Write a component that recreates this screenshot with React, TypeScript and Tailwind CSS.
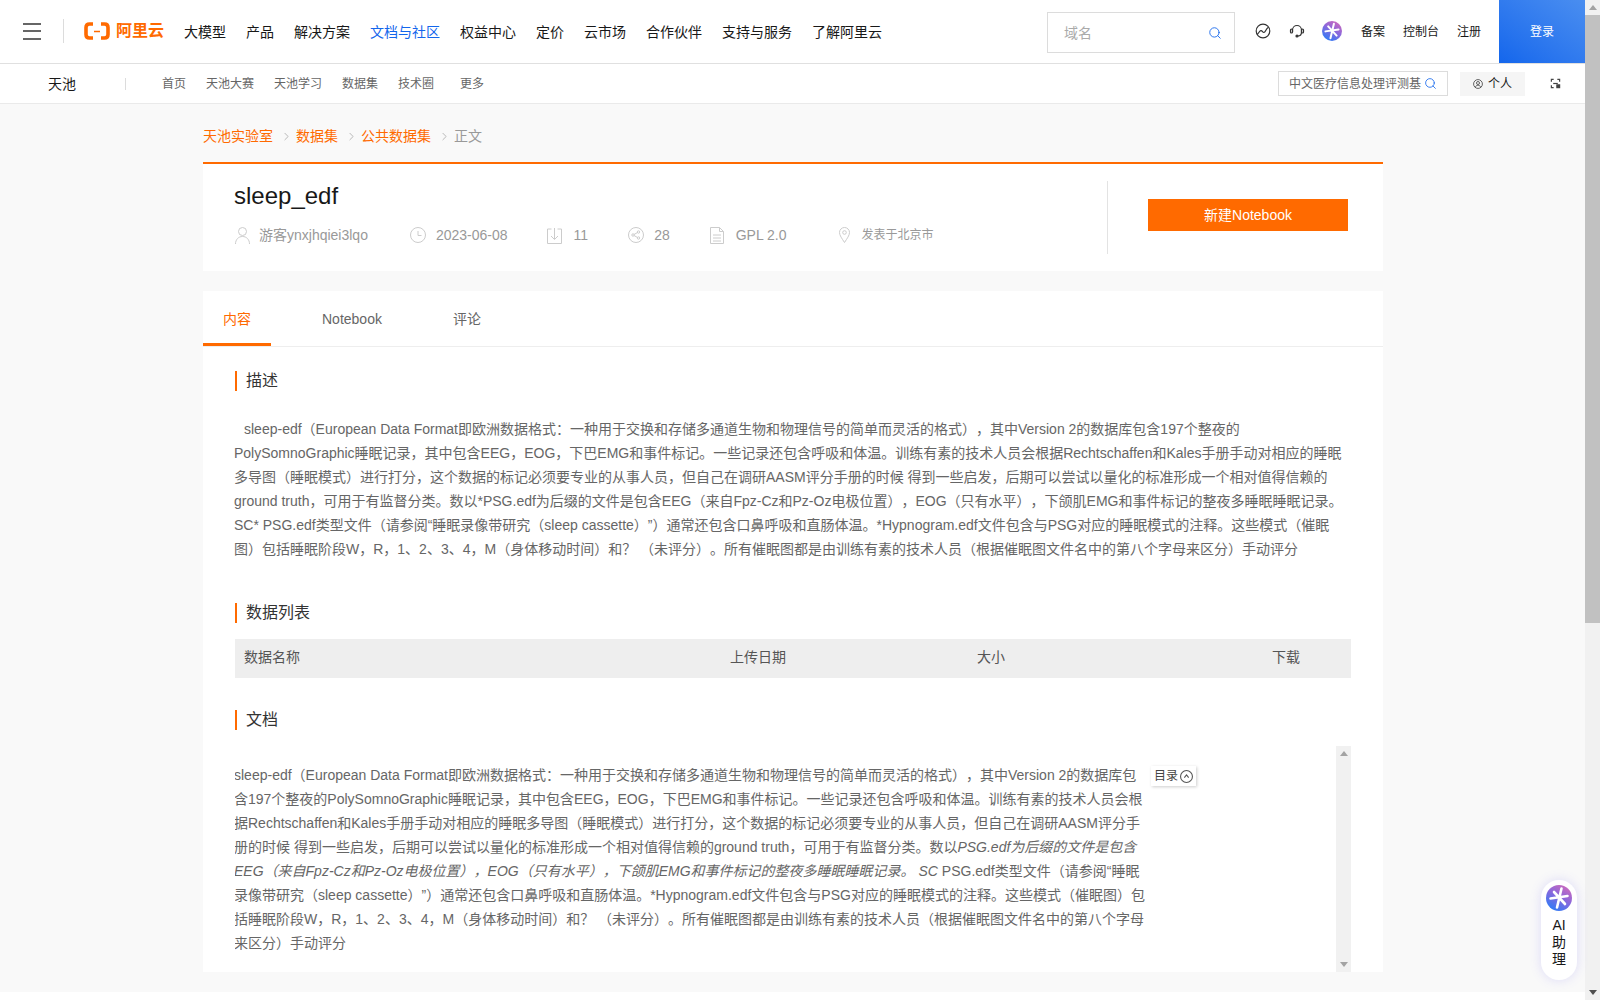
import { ChevronRight, Search } from 'lucide-react';

const navItems = ['大模型', '产品', '解决方案', '文档与社区', '权益中心', '定价', '云市场', '合作伙伴', '支持与服务', '了解阿里云'];
const subNavItems = ['首页', '天池大赛', '天池学习', '数据集', '技术圈'];

const descLines = [
  'sleep-edf（European Data Format即欧洲数据格式：一种用于交换和存储多通道生物和物理信号的简单而灵活的格式），其中Version 2的数据库包含197个整夜的',
  'PolySomnoGraphic睡眠记录，其中包含EEG，EOG，下巴EMG和事件标记。一些记录还包含呼吸和体温。训练有素的技术人员会根据Rechtschaffen和Kales手册手动对相应的睡眠',
  '多导图（睡眠模式）进行打分，这个数据的标记必须要专业的从事人员，但自己在调研AASM评分手册的时候 得到一些启发，后期可以尝试以量化的标准形成一个相对值得信赖的',
  'ground truth，可用于有监督分类。数以*PSG.edf为后缀的文件是包含EEG（来自Fpz-Cz和Pz-Oz电极位置），EOG（只有水平），下颌肌EMG和事件标记的整夜多睡眠睡眠记录。',
  'SC* PSG.edf类型文件（请参阅“睡眠录像带研究（sleep cassette）”）通常还包含口鼻呼吸和直肠体温。*Hypnogram.edf文件包含与PSG对应的睡眠模式的注释。这些模式（催眠',
  '图）包括睡眠阶段W，R，1、2、3、4，M（身体移动时间）和？ （未评分）。所有催眠图都是由训练有素的技术人员（根据催眠图文件名中的第八个字母来区分）手动评分',
];

function SectionTitle({ children }: { children: string }) {
  return (
    <h2 className="h-5 border-l-2 border-[#ff6a00] pl-[9px] text-base leading-5 font-normal text-[#333]">{children}</h2>
  );
}

function AiBadge({ className }: { className: string }) {
  return (
    <svg viewBox="0 0 26 26" className={className}>
      <defs>
        <linearGradient id="ai-grad" x1="0.9" y1="0" x2="0.3" y2="1">
          <stop offset="0" stopColor="#d66ab8" />
          <stop offset="0.5" stopColor="#8a68dc" />
          <stop offset="1" stopColor="#2f7bf6" />
        </linearGradient>
      </defs>
      <circle cx="13" cy="13" r="13" fill="url(#ai-grad)" />
      <path d="M15.5 3.5 11 22.5M4.5 13.5 21.5 11M8 7l11 12" stroke="#fff" strokeWidth="2.6" strokeLinecap="round" />
    </svg>
  );
}

function TopNav() {
  return (
    <header className="flex h-16 items-center border-b border-[#e0e0e0] bg-white pb-px">
      <div className="ml-[23px] flex h-[17px] w-[18px] flex-col justify-between">
        <span className="h-0.5 bg-[#666]" />
        <span className="h-0.5 bg-[#666]" />
        <span className="h-0.5 bg-[#666]" />
      </div>
      <span className="ml-[22px] h-6 w-px bg-[#dcdcdc]" />
      <div className="ml-5 flex w-[80px] items-center gap-1.5">
        <svg viewBox="0 0 26 18" className="h-[18px] w-[26px] shrink-0">
          <path d="M9 2H5.500Q2 2 2 5.500v7Q2 16 5.500 16H9M17 2h3.500Q24 2 24 5.500v7q0 3.500-3.500 3.500H17" fill="none" stroke="#ff6a00" strokeWidth="3.600" />
          <path d="M10 9.500h6" stroke="#ff6a00" strokeWidth="1.500" />
        </svg>
        <span className="text-base leading-5 font-bold whitespace-nowrap text-[#ff6a00]">阿里云</span>
      </div>
      <nav className="mt-0.5 ml-[20px] flex gap-5 text-sm text-[#181818]">
        {navItems.map((item) => (
          <a key={item} className={item === '文档与社区' ? 'whitespace-nowrap text-[#1366ec]' : 'whitespace-nowrap'}>
            {item}
          </a>
        ))}
      </nav>
      <div className="mt-3 ml-auto flex h-[41px] w-[188px] items-center justify-between self-start border border-[#dcdcdc] pr-3 pl-4 text-sm text-[#aaa]">
        域名
        <Search className="size-3.5 text-[#1366ec]" strokeWidth={1.5} />
      </div>
      <svg viewBox="0 0 16 16" fill="none" stroke="#333" strokeWidth="1.2" className="ml-[20px] size-4">
        <circle cx="8" cy="8" r="6.800" />
        <path d="M2 11.500c1.500-.5 2-3.500 3.800-3.800 1.700-.3 1.700 2 3.200 1.800 1.800-.3 1.800-3.500 4-5" />
      </svg>
      <svg viewBox="0 0 16 16" fill="none" stroke="#333" strokeWidth="1.2" className="ml-[18px] size-4">
        <path d="M3.500 9V7a4.500 4.500 0 0 1 9 0v2c0 2.500-1.500 4-3.500 4" />
        <rect x="1.500" y="6" width="2" height="4" rx="1" />
        <rect x="12.500" y="6" width="2" height="4" rx="1" />
        <circle cx="8" cy="13" r="1" fill="#333" />
      </svg>
      <AiBadge className="ml-[17px] size-5" />
      <div className="mt-0.5 ml-[19px] flex gap-[18px] text-xs text-[#181818]">
        <a>备案</a>
        <a>控制台</a>
        <a>注册</a>
      </div>
      <button className="mb-[-1px] ml-[18px] h-[63px] w-[86px] self-start bg-gradient-to-tr from-[#1366ec] to-[#4a8ef0] text-xs text-white">
        登录
      </button>
    </header>
  );
}

function SubNav() {
  return (
    <div className="flex h-10 items-center border-b border-[#eaeaea] bg-white text-xs">
      <span className="ml-12 text-sm text-[#181818]">天池</span>
      <span className="ml-[49px] h-3 w-px bg-[#dcdcdc]" />
      <nav className="ml-[36px] flex gap-5 text-[#666]">
        {subNavItems.map((item) => (
          <a key={item}>{item}</a>
        ))}
        <a className="ml-1.5">更多</a>
      </nav>
      <div className="ml-auto flex h-[25px] w-[170px] items-center border border-[#dcdcdc] pl-[10px] text-[#666]">
        <span className="whitespace-nowrap">中文医疗信息处理评测基</span>
        <Search className="ml-[3px] size-[13px] text-[#1366ec]" strokeWidth={1.5} />
      </div>
      <div className="ml-3 flex h-6 w-[65px] items-center gap-[5px] bg-[#f5f5f5] pl-[13px] text-[#181818]">
        <svg viewBox="0 0 12 12" fill="none" stroke="#444" strokeWidth="1" className="size-2.5">
          <circle cx="6" cy="6" r="5.300" />
          <circle cx="6" cy="4.800" r="1.800" />
          <path d="M2.800 10c.5-1.800 1.700-2.500 3.200-2.500s2.700.7 3.200 2.500" />
        </svg>
        个人
      </div>
      <svg viewBox="0 0 12 12" fill="none" stroke="#444" strokeWidth="1.300" className="mr-6 ml-[25px] size-[11px]">
        <path d="M4 1.500H1.500V4M8 1.500h2.500V4M4 10.500H1.500V8" />
        <rect x="7.500" y="7.500" width="3" height="3" fill="#444" />
        <path d="M3.500 6h5" />
      </svg>
    </div>
  );
}

function ArticleHead() {
  return (
    <section className="flex h-[109px] border-t-2 border-[#ff6a00] bg-white">
      <div className="pt-[18px] pl-[31px]">
        <h1 className="text-2xl leading-7 font-normal text-[#181818]">sleep_edf</h1>
        <div className="mt-[15px] flex h-5 items-center text-sm whitespace-nowrap text-[#999]">
          <svg viewBox="0 0 15 18" fill="none" stroke="#ccc" className="ml-px h-[18px] w-[15px]">
            <circle cx="7.500" cy="5.500" r="4" />
            <path d="M.5 18c0-4.500 3-7.500 7-7.500s7 3 7 7.500" />
          </svg>
          <span className="ml-[9px]">游客ynxjhqiei3lqo</span>
          <svg viewBox="0 0 16 16" fill="none" stroke="#ccc" className="ml-[42px] size-4">
            <circle cx="8" cy="8" r="7.500" />
            <path d="M8 4v4.500h3.500" />
          </svg>
          <span className="ml-[10px]">2023-06-08</span>
          <svg viewBox="0 0 15 17" fill="none" stroke="#ccc" className="ml-[39px] h-[17px] w-[15px]">
            <path d="M4.500 2H.5v14.500h14V2h-4M7.500 1v11M4 9l3.500 3.500L11 9" />
          </svg>
          <span className="ml-3">11</span>
          <svg viewBox="0 0 16 16" fill="none" stroke="#ccc" className="ml-10 size-4">
            <circle cx="8" cy="8" r="7.500" />
            <circle cx="5" cy="8" r="1.200" />
            <circle cx="10.500" cy="5" r="1.200" />
            <circle cx="10.500" cy="11" r="1.200" />
            <path d="M6 7.500l3.500-2M6 8.500l3.500 2" />
          </svg>
          <span className="ml-[10px]">28</span>
          <svg viewBox="0 0 14 17" fill="none" stroke="#ccc" className="ml-10 h-[17px] w-[14px]">
            <path d="M.5.5h9l4 4v12H.5zM9.500.5v4h4M3 8h8M3 11h8M3 14h8" />
          </svg>
          <span className="ml-3">GPL 2.0</span>
          <svg viewBox="0 0 11 16" fill="none" stroke="#ccc" className="ml-[52px] h-4 w-[11px]">
            <path d="M5.500 15.500C3 11.500.5 8.500.5 5.500a5 5 0 0 1 10 0c0 3-2.500 6-5 10z" />
            <circle cx="5.500" cy="5.500" r="1.800" />
          </svg>
          <span className="ml-3 text-xs">发表于北京市</span>
        </div>
      </div>
      <div className="mt-[17px] ml-auto h-[73px] w-px bg-[#e3e3e3]" />
      <div className="ml-10 pt-[35px] pr-[35px]">
        <button className="h-8 w-[200px] bg-[#ff6a00] text-sm text-white">新建Notebook</button>
      </div>
    </section>
  );
}

function DocPane() {
  return (
    <div className="mt-4 flex h-[226px] overflow-hidden">
      <div className="-ml-px w-[917px] pt-[17px] text-sm leading-6 whitespace-nowrap text-[#666]">
        <p>sleep-edf（European Data Format即欧洲数据格式：一种用于交换和存储多通道生物和物理信号的简单而灵活的格式），其中Version 2的数据库包</p>
        <p>含197个整夜的PolySomnoGraphic睡眠记录，其中包含EEG，EOG，下巴EMG和事件标记。一些记录还包含呼吸和体温。训练有素的技术人员会根</p>
        <p>据Rechtschaffen和Kales手册手动对相应的睡眠多导图（睡眠模式）进行打分，这个数据的标记必须要专业的从事人员，但自己在调研AASM评分手</p>
        <p>册的时候 得到一些启发，后期可以尝试以量化的标准形成一个相对值得信赖的ground truth，可用于有监督分类。数以<em>PSG.edf为后缀的文件是包含</em></p>
        <p><em>EEG（来自Fpz-Cz和Pz-Oz电极位置），EOG（只有水平），下颌肌EMG和事件标记的整夜多睡眠睡眠记录。 SC</em> PSG.edf类型文件（请参阅“睡眠</p>
        <p>录像带研究（sleep cassette）”）通常还包含口鼻呼吸和直肠体温。*Hypnogram.edf文件包含与PSG对应的睡眠模式的注释。这些模式（催眠图）包</p>
        <p>括睡眠阶段W，R，1、2、3、4，M（身体移动时间）和？ （未评分）。所有催眠图都是由训练有素的技术人员（根据催眠图文件名中的第八个字母</p>
        <p>来区分）手动评分</p>
      </div>
      <div className="mt-5 flex h-5 w-[45px] items-center justify-center gap-0.5 self-start bg-white text-xs text-[#444] shadow-[1px_1px_3px_rgba(0,0,0,0.2)]">
        目录
        <svg viewBox="0 0 12 12" fill="none" stroke="#555" className="size-[13px]">
          <circle cx="6" cy="6" r="5.500" />
          <path d="M4 7l2-2.500L8 7" />
        </svg>
      </div>
      <div className="ml-auto flex w-[15px] flex-col items-center justify-between bg-[#f1f1f1] py-[5px]">
        <span className="h-0 w-0 border-x-[4px] border-b-[5px] border-x-transparent border-b-[#a3a3a3]" />
        <span className="h-0 w-0 border-x-[4px] border-t-[5px] border-x-transparent border-t-[#a3a3a3]" />
      </div>
    </div>
  );
}

export default function App() {
  return (
    <div className="relative flex h-[1000px] overflow-hidden bg-white font-['Liberation_Sans','Noto_Sans_CJK_SC',sans-serif] [text-spacing-trim:space-all]">
      <main className="h-[992px] w-[1585px] shrink-0 overflow-hidden bg-[#f9f9f9]">
        <TopNav />
        <SubNav />
        <div className="mx-[203px] w-[1180px]">
          <div className="flex h-[58px] items-center gap-[5px] pt-[6px] text-sm text-[#ff6a00]">
            <a>天池实验室</a>
            <ChevronRight className="size-[13px] translate-x-0.5 text-[#aaa]" strokeWidth={1.5} />
            <a>数据集</a>
            <ChevronRight className="size-[13px] translate-x-0.5 text-[#aaa]" strokeWidth={1.5} />
            <a>公共数据集</a>
            <ChevronRight className="size-[13px] translate-x-0.5 text-[#aaa]" strokeWidth={1.5} />
            <span className="text-[#999]">正文</span>
          </div>
          <ArticleHead />
          <section className="mt-5 bg-white">
            <div className="flex h-14 border-b border-[#eee] text-sm text-[#666]">
              <a className="flex w-[68px] items-center justify-center border-b-[3px] border-[#ff6a00] pt-[3px] text-[#ff6a00]">内容</a>
              <a className="ml-[51px] flex items-center">Notebook</a>
              <a className="ml-[71px] flex items-center">评论</a>
            </div>
            <div className="px-8 pt-6">
              <SectionTitle>描述</SectionTitle>
              <div className="mt-[26px] -ml-px text-sm leading-6 whitespace-nowrap text-[#666]">
                {descLines.map((line, index) => (
                  <p key={index} className={index === 0 ? 'pl-[10px]' : ''}>
                    {line}
                  </p>
                ))}
              </div>
              <div className="mt-[42px]">
                <SectionTitle>数据列表</SectionTitle>
              </div>
              <div className="mt-4 grid h-[39px] grid-cols-[486px_247px_295px_1fr] items-center bg-[#eee] px-[9px] pb-[3px] text-sm text-[#555]">
                <span>数据名称</span>
                <span>上传日期</span>
                <span>大小</span>
                <span>下载</span>
              </div>
              <div className="mt-8">
                <SectionTitle>文档</SectionTitle>
              </div>
              <DocPane />
            </div>
          </section>
        </div>
      </main>
      <aside className="flex w-[15px] flex-col items-center bg-[#f1f1f1]">
        <span className="mt-[5px] h-0 w-0 border-x-[4px] border-b-[5px] border-x-transparent border-b-[#a3a3a3]" />
        <span className="mt-[5px] h-[608px] w-full bg-[#c1c1c1]" />
        <span className="mt-auto mb-[5px] h-0 w-0 border-x-[4px] border-t-[5px] border-x-transparent border-t-[#505050]" />
      </aside>
      <div className="absolute top-[880px] left-[1541px] flex h-[100px] w-9 flex-col items-center rounded-full bg-white pt-[5px] text-sm leading-4 text-[#181818] shadow-[0_0_12px_rgba(110,100,240,0.2)]">
        <AiBadge className="size-[26px]" />
        <span className="mt-1.5">AI</span>
        <span className="mt-px">助</span>
        <span className="mt-px">理</span>
      </div>
    </div>
  );
}
